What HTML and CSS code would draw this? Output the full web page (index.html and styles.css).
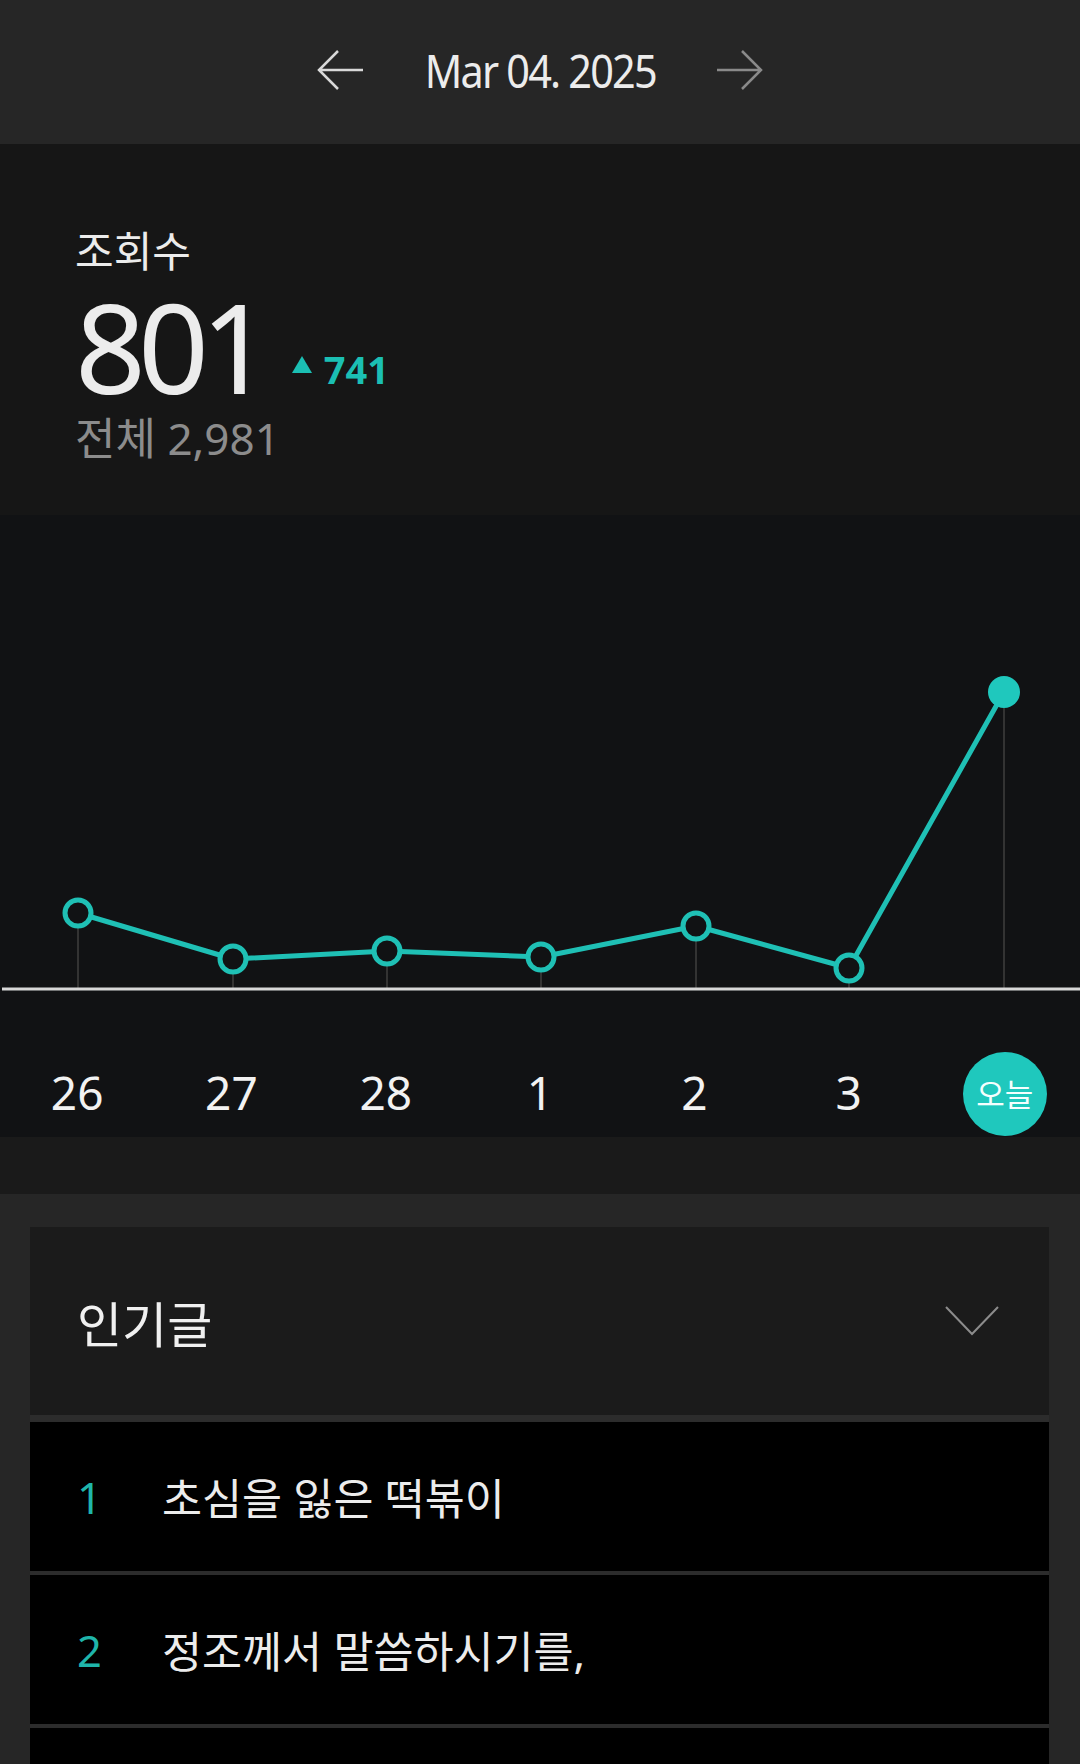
FILE: index.html
```html
<!DOCTYPE html>
<html lang="ko">
<head>
    <meta charset="UTF-8">
    <meta name="viewport" content="width=device-width, initial-scale=1.0">
    <title>조회수 통계</title>
    <link rel="stylesheet" href="styles.css">
</head>
<body>
    <!-- Barra de data -->
    <header class="date-bar">
        <svg class="nav-arrow" width="48" height="40" viewBox="0 0 48 40">
            <path d="M47 20 H3 M22 1 L3 20 L22 39" fill="none" stroke="#d9d9d9" stroke-width="2.5"/>
        </svg>
        <span class="date-text">Mar 04. 2025</span>
        <svg class="nav-arrow" width="48" height="40" viewBox="0 0 48 40">
            <path d="M1 20 H45 M26 1 L45 20 L26 39" fill="none" stroke="#8a8a8a" stroke-width="2.5"/>
        </svg>
    </header>

    <!-- Resumo -->
    <section class="stats">
        <div class="stats-label">조회수</div>
        <div class="stats-row">
            <span class="stats-value">801</span>
            <span class="stats-delta"><span class="tri"></span>741</span>
        </div>
        <div class="stats-total">전체 2,981</div>
    </section>

    <!-- Gráfico -->
    <section class="chart">
        <svg class="chart-svg" width="1080" height="485" viewBox="0 0 1080 485">
            <g stroke="#333333" stroke-width="2">
                <line x1="78" y1="398" x2="78" y2="474"/>
                <line x1="233" y1="444" x2="233" y2="474"/>
                <line x1="387" y1="436" x2="387" y2="474"/>
                <line x1="541" y1="442" x2="541" y2="474"/>
                <line x1="696" y1="411" x2="696" y2="474"/>
                <line x1="849" y1="453" x2="849" y2="474"/>
                <line x1="1004" y1="177" x2="1004" y2="474"/>
            </g>
            <line x1="2" y1="474" x2="1080" y2="474" stroke="#d8d8d8" stroke-width="3"/>
            <polyline points="78,398 233,444 387,436 541,442 696,411 849,453 1004,177" fill="none" stroke="#1fc0b5" stroke-width="5" stroke-linejoin="round"/>
            <g fill="#111214" stroke="#1fc0b5" stroke-width="5">
                <circle cx="78" cy="398" r="13"/>
                <circle cx="233" cy="444" r="13"/>
                <circle cx="387" cy="436" r="13"/>
                <circle cx="541" cy="442" r="13"/>
                <circle cx="696" cy="411" r="13"/>
                <circle cx="849" cy="453" r="13"/>
            </g>
            <circle cx="1004" cy="177" r="16" fill="#1fc8bd"/>
        </svg>
        <div class="chart-labels">
            <span>26</span>
            <span>27</span>
            <span>28</span>
            <span>1</span>
            <span>2</span>
            <span>3</span>
            <span><span class="today">오늘</span></span>
        </div>
    </section>

    <div class="strip"></div>

    <!-- Posts populares -->
    <section class="popular">
        <div class="popular-head">
            <span class="popular-title">인기글</span>
            <svg width="54" height="30" viewBox="0 0 54 30">
                <polyline points="1,1 27,28 53,1" fill="none" stroke="#8c8c8c" stroke-width="2"/>
            </svg>
        </div>
        <ul class="post-list">
            <li class="post-item"><span class="post-rank">1</span>초심을 잃은 떡볶이</li>
            <li class="post-item"><span class="post-rank">2</span>정조께서 말씀하시기를,</li>
            <li class="post-item"></li>
        </ul>
    </section>
</body>
</html>
```

FILE: styles.css
```css
body {
    font-family: "Noto Sans", "Noto Sans CJK KR", sans-serif;
    margin: 0;
    padding: 0;
    background-color: #262626;
    color: #ececec;
}

.date-bar {
    height: 144px;
    background-color: #262626;
    display: flex;
    justify-content: center;
    align-items: center;
    gap: 48px;
    padding: 0 0 4px 0;
    box-sizing: border-box;
}

.nav-arrow {
    display: block;
}

.date-text {
    display: inline-block;
    font-size: 46px;
    letter-spacing: -2px;
    color: #ececec;
    line-height: 1;
    transform: scaleX(0.9);
}

.stats {
    background-color: #161616;
    height: 371px;
    padding: 82px 0 0 75px;
    box-sizing: border-box;
}

.stats-label {
    font-size: 42px;
    line-height: 50px;
    color: #ececec;
}

.stats-row {
    display: flex;
    align-items: flex-end;
    height: 96px;
    margin-top: 22px;
}

.stats-value {
    font-size: 124px;
    line-height: 96px;
    letter-spacing: -8px;
    color: #ececec;
}

.stats-delta {
    display: flex;
    align-items: center;
    gap: 12px;
    margin-left: 28px;
    margin-bottom: 6px;
    font-size: 38px;
    font-weight: bold;
    line-height: 1;
    color: #1bbfb3;
}

.tri {
    width: 0;
    height: 0;
    border-left: 10px solid transparent;
    border-right: 10px solid transparent;
    border-bottom: 17px solid #1bbfb3;
    margin-bottom: 10px;
}

.stats-total {
    margin-top: 19px;
    font-size: 44px;
    line-height: 50px;
    color: #8c8c8c;
}

.chart {
    background-color: #111214;
    height: 622px;
}

.chart-svg {
    display: block;
}

.chart-labels {
    display: grid;
    grid-template-columns: repeat(7, 1fr);
    padding-top: 52px;
}

.chart-labels > span {
    height: 84px;
    display: flex;
    justify-content: center;
    align-items: center;
    font-size: 46px;
    line-height: 1;
    padding-bottom: 4px;
    box-sizing: border-box;
    color: #f2f2f2;
}

.today {
    width: 84px;
    height: 84px;
    margin: 4px 0 0 4px;
    border-radius: 50%;
    background-color: #1fc8bd;
    display: flex;
    justify-content: center;
    align-items: center;
    font-size: 31px;
    color: #f4fffe;
}

.strip {
    height: 57px;
    background-color: #1a1a1a;
}

.popular {
    padding: 33px 31px 0 30px;
}

.popular-head {
    height: 188px;
    background-color: #1b1b1b;
    display: flex;
    justify-content: space-between;
    align-items: center;
    padding: 0 50px 0 47px;
}

.popular-title {
    font-size: 49px;
    color: #f0f0f0;
}

.post-list {
    list-style: none;
    margin: 0;
    padding: 7px 0 0;
    background-color: #2c2c2c;
    display: flex;
    flex-direction: column;
    gap: 4px;
}

.post-item {
    height: 149px;
    background-color: #000;
    display: flex;
    align-items: center;
    padding-left: 47px;
    font-size: 43.5px;
    color: #ececec;
}

.post-rank {
    width: 85px;
    color: #1fb5aa;
}
```
